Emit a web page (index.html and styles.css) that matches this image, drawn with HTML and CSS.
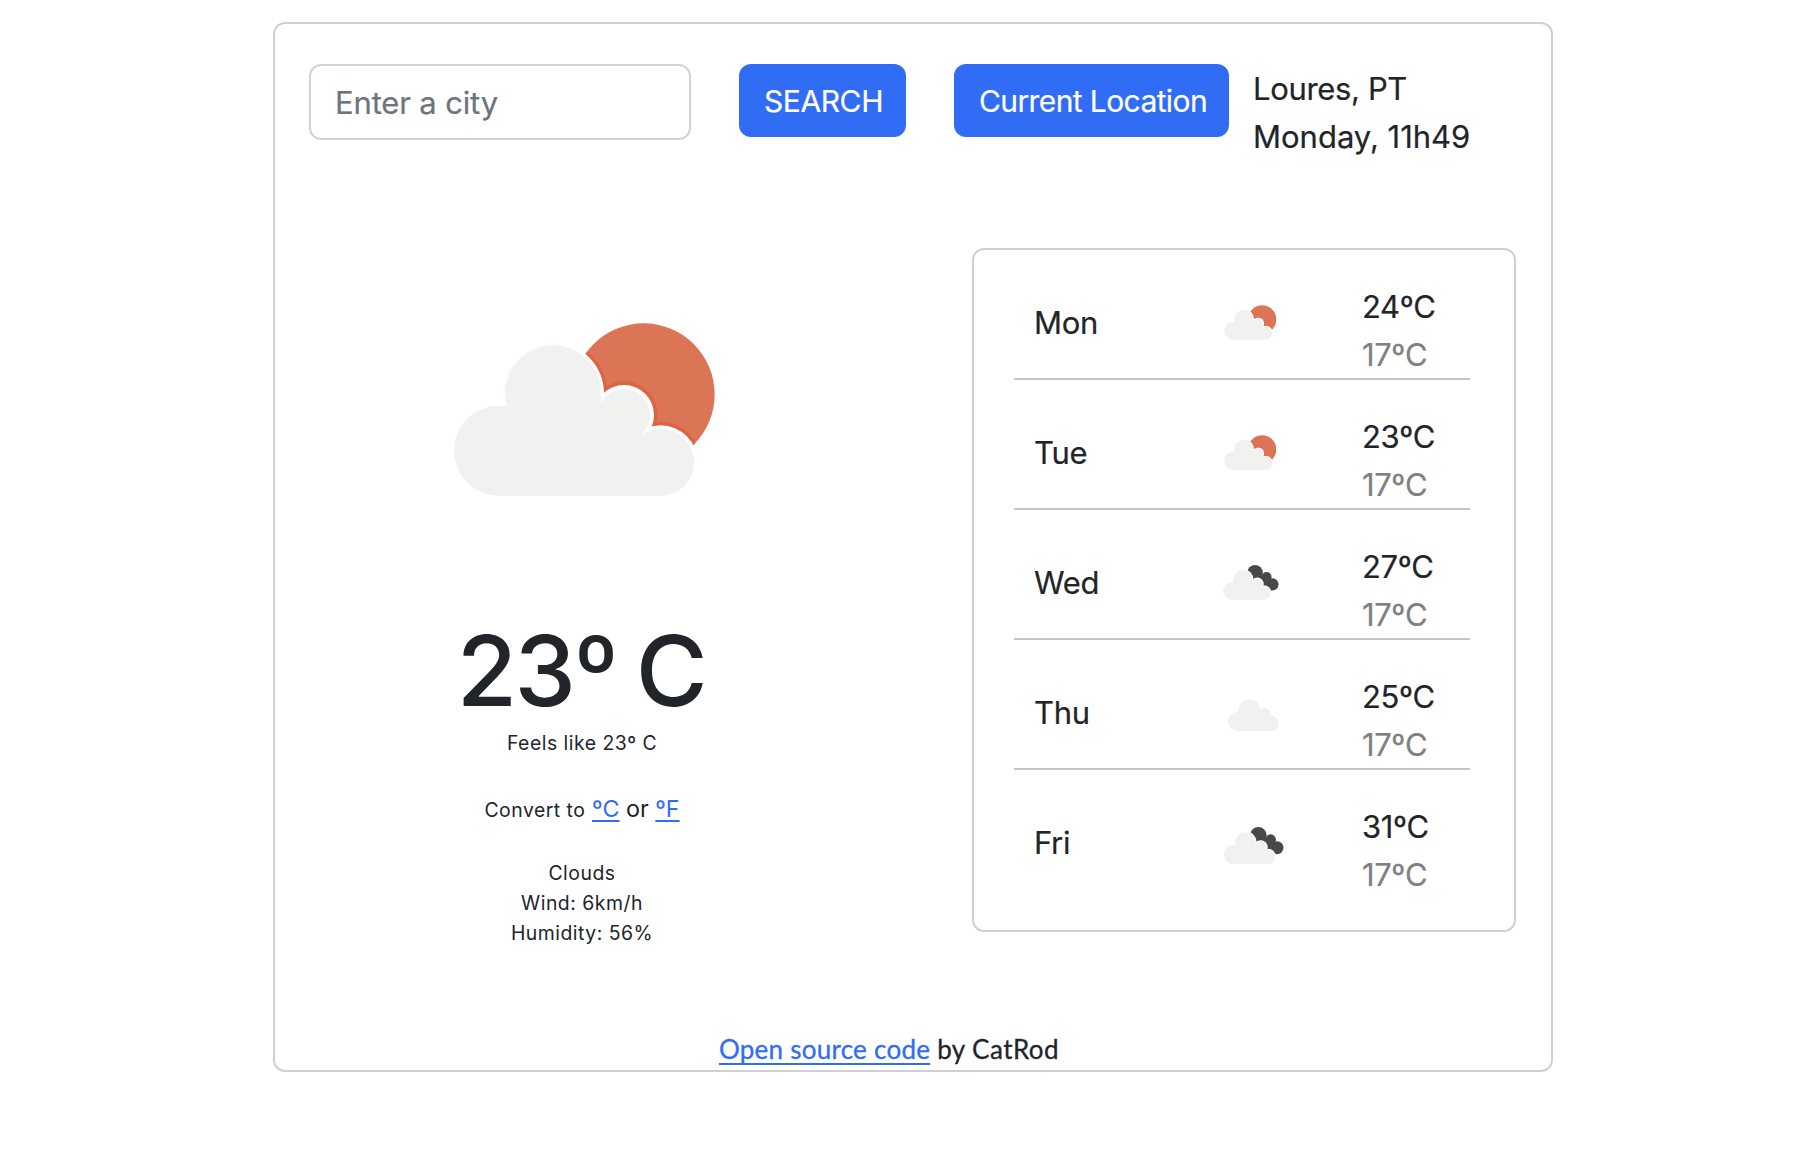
FILE: index.html
```html
<!DOCTYPE html>
<html lang="en">
<head>
<meta charset="utf-8">
<title>Weather</title>
<link rel="stylesheet" href="styles.css">
</head>
<body>
<svg class="symbols" aria-hidden="true">
  <defs>
    <clipPath id="sun-disc"><circle cx="642" cy="283" r="213"/></clipPath>
    <symbol id="few-clouds" viewBox="70 66 786 525">
      <circle cx="642" cy="283" r="213" fill="#dc7555"/>
      <g clip-path="url(#sun-disc)" fill="#dd6440">
        <circle cx="370" cy="280" r="163"/><circle cx="583" cy="345" r="101"/><circle cx="693" cy="487" r="121"/>
      </g>
      <g fill="#fbffff">
        <circle cx="370" cy="280" r="153"/><circle cx="583" cy="345" r="90"/><circle cx="693" cy="487" r="111"/>
      </g>
      <g fill="#f1f1ef">
        <circle cx="208" cy="452" r="135"/><circle cx="370" cy="280" r="144"/><circle cx="583" cy="345" r="78"/><circle cx="693" cy="487" r="100"/>
        <path d="M208 587H693V400H640L583 343L505 300L370 280L226 330Z"/>
      </g>
    </symbol>
    <symbol id="broken-clouds" viewBox="71 80 180 112">
      <g fill="#484848">
        <circle cx="174" cy="105" r="25"/><circle cx="211" cy="118" r="16"/><circle cx="230" cy="142" r="19.5"/>
        <path d="M174 105L197 110L211 118L222 128L230 142L215 156L160 150Z"/>
      </g>
      <g fill="#fff">
        <circle cx="135" cy="127" r="34"/><circle cx="181" cy="141" r="21"/><circle cx="202" cy="170" r="25"/>
      </g>
      <g fill="#f1f1ef">
        <circle cx="100" cy="163" r="29"/><circle cx="135" cy="127" r="31"/><circle cx="181" cy="141" r="18"/><circle cx="202" cy="170" r="22"/>
        <path d="M100 192H202V150H192L181 140L160 132L135 127L104 137Z"/>
      </g>
    </symbol>
    <symbol id="cloud" viewBox="83 57 155 97">
      <g fill="#f1f1ef">
        <circle cx="112" cy="125" r="29"/><circle cx="148" cy="91" r="33"/><circle cx="193" cy="104" r="20"/><circle cx="214" cy="131" r="23"/>
        <path d="M112 154H214V110H205L193 104L175 95L148 91L115 100Z"/>
      </g>
    </symbol>
  </defs>
</svg>
<main class="app">
  <header class="toolbar">
    <input class="city" type="text" placeholder="Enter a city">
    <button class="btn btn-search">SEARCH</button>
    <button class="btn btn-location">Current Location</button>
    <div class="place"><div class="place-city">Loures, PT</div><div>Monday, 11h49</div></div>
  </header>
  <div class="content">
    <section class="today">
      <svg class="today-icon"><use href="#few-clouds"/></svg>
      <h1>23º C</h1>
      <p class="feels">Feels like 23º C</p>
      <p class="convert"><span class="small">Convert to</span> <a href="#">ºC</a> or <a href="#">ºF</a></p>
      <p class="details">Clouds<br>Wind: 6km/h<br>Humidity: 56%</p>
    </section>
    <section class="forecast">
      <div class="day"><span class="name">Mon</span><svg class="icon few"><use href="#few-clouds"/></svg><div class="temps"><div>24ºC</div><div class="low">17ºC</div></div></div>
      <div class="day"><span class="name">Tue</span><svg class="icon few"><use href="#few-clouds"/></svg><div class="temps"><div>23ºC</div><div class="low">17ºC</div></div></div>
      <div class="day"><span class="name">Wed</span><svg class="icon broken"><use href="#broken-clouds"/></svg><div class="temps"><div>27ºC</div><div class="low">17ºC</div></div></div>
      <div class="day"><span class="name">Thu</span><svg class="icon overcast"><use href="#cloud"/></svg><div class="temps"><div>25ºC</div><div class="low">17ºC</div></div></div>
      <div class="day"><span class="name">Fri</span><svg class="icon broken-lg"><use href="#broken-clouds"/></svg><div class="temps"><div>31ºC</div><div class="low">17ºC</div></div></div>
    </section>
  </div>
  <footer><a href="#">Open source code</a> <span class="author">by CatRod</span></footer>
</main>
</body>
</html>
```
FILE: styles.css
```css
* { box-sizing: border-box; }
body { margin: 0; background: #fff; color: #212529; font: 31px/48px Inter, "Liberation Sans", sans-serif; }
.symbols { position: absolute; width: 0; height: 0; }
a { color: #316cf4; text-decoration: underline; }
h1, p { margin: 0; }

.app { width: 1280px; height: 1050px; margin: 22px 0 0 273px; border: 2px solid #d0d0d0; border-radius: 12px; display: flex; flex-direction: column; }

.toolbar { display: flex; align-items: flex-start; padding: 40px 0 0 34px; height: 224px; -webkit-text-stroke: 0.2px currentColor; }
.city { width: 382px; height: 76px; padding: 1px 24px 0; border: 2px solid #ced4da; border-radius: 12px; font: inherit; letter-spacing: -0.15px; }
.city::placeholder { color: #6c757d; opacity: 1; }
.btn { height: 73px; padding: 1px 0 0 2px; border: 0; border-radius: 12px; background: #316cf4; color: #fff; font: inherit; font-size: 30px; letter-spacing: -0.4px; margin-left: 48px; white-space: nowrap; }
.btn-search { width: 167px; }
.btn-location { width: 275px; padding-left: 3px; letter-spacing: -0.6px; }
.place { margin-left: 24px; padding-top: 1px; white-space: nowrap; }
.place-city { letter-spacing: -0.35px; }

.content { display: flex; justify-content: space-between; padding-right: 35px; height: 684px; }
.today { width: 614px; text-align: center; display: flex; flex-direction: column; align-items: center; font-size: 19.4px; line-height: 30px; }
.today-icon { flex: none; width: 262px; height: 175px; margin: 74px 0 0 4px; }
h1 { margin-top: 116px; font-size: 98px; line-height: 115px; font-weight: 500; letter-spacing: -2.5px; word-spacing: -4px; white-space: nowrap; padding-right: 2px; }
.feels { letter-spacing: 0.5px; }
.convert { margin-top: 33px; font-size: 23.3px; line-height: 36px; }
.small { font-size: 19.4px; letter-spacing: 0.5px; }
.convert a { text-underline-offset: 3px; text-decoration-thickness: 2px; }
.details { margin-top: 30px; letter-spacing: 0.5px; }

.forecast { width: 544px; height: 684px; padding: 0 44px 0 40px; border: 2px solid #d0d0d0; border-radius: 12px; -webkit-text-stroke: 0.2px currentColor; }
.day { display: grid; grid-template-columns: 188px 140px 1fr; height: 130px; padding: 32px 0 0 20px; border-bottom: 2px solid #c6c6c6; }
.day:last-child { border-bottom: 0; }
.name { padding-top: 17px; letter-spacing: -0.3px; }
.temps { padding-top: 1px; letter-spacing: -0.4px; }
.low { color: #808080; }
.few { width: 52.4px; height: 35px; margin: 23px 0 0 2.4px; }
.broken { width: 56px; height: 35px; margin: 23px 0 0 0.7px; }
.overcast { width: 51px; height: 32px; margin: 27px 0 0 5.7px; }
.broken-lg { width: 60px; height: 37.3px; margin: 24.7px 0 0 1.7px; }

footer { margin-top: 101px; padding-right: 48px; text-align: center; font: 26px/32px Lato, "Open Sans", sans-serif; letter-spacing: 0.25px; -webkit-text-stroke: 0.3px currentColor; }
footer a { text-underline-offset: 4px; text-decoration-thickness: 2px; }
.author { letter-spacing: 0.45px; }
```
